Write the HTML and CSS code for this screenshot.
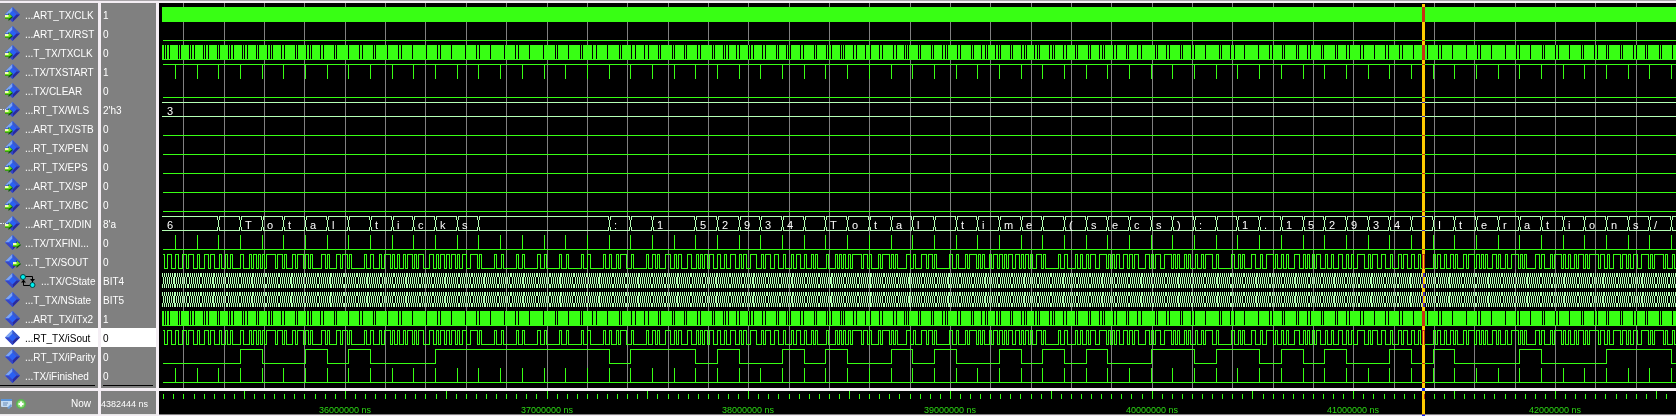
FILE: index.html
```html
<!DOCTYPE html>
<html lang="en">
<head>
<meta charset="utf-8">
<title>Wave - UART_TX</title>
<link rel="stylesheet" href="styles.css">
</head>
<body>
<svg class="defs" aria-hidden="true">
  <symbol id="diamond" viewBox="0 0 15 15">
    <path d="M7.500 0 15 7.500 7.500 15 0 7.500Z" fill="#2a60f4"/>
    <path d="M7.500 0 0 7.500H3.500L7.500 3.500Z" fill="#7fa6f2"/>
    <path d="M7.500 0 15 7.500H11.500L7.500 3.500Z" fill="#3c58c8"/>
    <path d="M15 7.500 7.500 15V11.500L11.500 7.500Z" fill="#2a2a9c"/>
    <path d="M0 7.500 7.500 15V11.500L3.500 7.500Z" fill="#3846c4"/>
  </symbol>
  <symbol id="arrow" viewBox="0 0 8 8">
    <path d="M0 2.500H3.500V0L8 4 3.500 8V6H0Z" fill="#0b5a08"/>
    <path d="M0 2H4V.500L7 3.500 4 5.500H0Z" fill="#6ee01c"/>
    <path d="M0 2H3.500V4H0Z" fill="#f4ffb8"/>
  </symbol>
  <symbol id="fsm" viewBox="0 0 16 14">
    <path d="M5 2.500H12.500V9M3.500 5V11.500H10" fill="none" stroke="#000"/>
    <path d="M10 5H15L12.500 8ZM1 8.500H6L3.500 5.500Z" fill="#000"/>
    <circle cx="3" cy="3" r="2.500" fill="#00f0f0" stroke="#044"/>
    <circle cx="12.500" cy="11" r="2.500" fill="#00f0f0" stroke="#044"/>
  </symbol>
</svg>
<main class="wave">
  <ul class="pane names" id="names"></ul>
  <ul class="pane values" id="values"></ul>
  <section class="scope"><svg id="scope" class="plot" role="img" aria-label="Signal waveforms"></svg></section>
  <div class="foot now">
    <svg class="tools" viewBox="0 0 26 12" aria-hidden="true">
      <rect x="1" y="1" width="11" height="8" rx="1" fill="#c4dcf4"/>
      <rect x="1" y="1" width="11" height="2" fill="#5c94d8"/>
      <path d="M3 5H8M3 7H7" stroke="#6c8cb4"/>
      <path d="M7 10 11 6 12 8 9 11Z" fill="#6f9fd8"/>
      <circle cx="21" cy="6" r="5" fill="#58b850"/>
      <circle cx="21" cy="6" r="3.500" fill="#8cdc74"/>
      <path d="M21 3.500V8.500M18.500 6H23.500" stroke="#fff" stroke-width="2"/>
    </svg>
    <span>Now</span>
  </div>
  <div class="foot time"><span>4382444 ns</span></div>
  <div class="foot ruler"><svg id="ruler" class="plot" role="img" aria-label="Time ruler"></svg></div>
  <div class="cursor"></div>
</main>
<script src="wave.js"></script>
</body>
</html>
```
FILE: styles.css
```css
* { box-sizing: border-box; }

body {
  margin: 0;
  background: #808080;
  font-family: "Liberation Sans", Arial, sans-serif;
  font-size: 10px;
  color: #fff;
}

.defs { position: absolute; width: 0; height: 0; }

.wave {
  position: relative;
  isolation: isolate;
  display: grid;
  grid-template-columns: 98px 55px 1fr;
  grid-template-rows: 385px 24px;
  gap: 3px;
  height: 100vh;
  min-height: 416px;
  padding-top: 3px;
  background: #f4eef4;
  box-shadow: inset 0 1px #a8a4a8;
  overflow: hidden;
}

.pane {
  margin: 0;
  padding: 2px 0 0;
  list-style: none;
  background: #808080;
  overflow: hidden;
}

.pane::after {
  content: "";
  display: block;
  height: 1px;
  background: #000;
}
.names::after { margin-right: 3px; }
.values::after { margin: 0 3px 0 2px; }

.row {
  display: flex;
  align-items: center;
  height: 19px;
  white-space: pre;
}
.names .row { padding-left: 5px; }
.values .row { padding: 2px 0 0 2px; }
.row.selected { background: #fff; color: #000; }

.icon { position: relative; display: flex; flex: none; width: 15px; height: 15px; }
.icon svg { width: 15px; height: 15px; }
.icon .dir { position: absolute; width: 8px; height: 8px; left: 0; top: 6px; }
.icon .dir.out { left: 8px; }
.icon.bus::before {
  content: "";
  position: absolute;
  left: -5px;
  top: 7px;
  width: 6px;
  border-top: 1px dotted #dde4f0;
}
.fsm { flex: none; width: 16px; height: 14px; }
.label { padding: 2px 0 0 5px; }

.scope, .ruler { background: #000; overflow: hidden; }
.plot { display: block; width: 100%; height: 100%; shape-rendering: crispEdges; }

.foot {
  display: flex;
  align-items: center;
  background: #808080;
  overflow: hidden;
  white-space: pre;
  border-bottom: 1px solid #e8e8e8;
}
.now { justify-content: space-between; padding: 2px 7px 0 0; }
.time { padding-top: 2px; font-size: 9px; }
.tools { width: 26px; height: 12px; }
.ruler { background: #000; border-bottom-color: #808080; }

.cursor {
  position: absolute;
  left: 1422px;
  top: 4px;
  bottom: 0;
  width: 3px;
  background: #ffcc00;
  mix-blend-mode: difference;
}

.grid { stroke: #808080; }
.bit { stroke: #38ff14; fill: none; }
.solid { fill: #38ff14; }
.gap { stroke: #000; }
.vec { stroke: #b4ffb4; fill: none; }
.chars { fill: #fff; font-size: 11px; }
.ticks { stroke: #38ff14; }
.times { fill: #2cd814; font-size: 9px; text-anchor: middle; }
```
FILE: wave.js
```js
const signals = [
  { name: "...ART_TX/CLK", value: "1", dir: "in", wave: "clock" },
  { name: "...ART_TX/RST", value: "0", dir: "in", wave: "low" },
  { name: "...T_TX/TXCLK", value: "0", dir: "in", wave: "fast" },
  { name: "...TX/TXSTART", value: "1", dir: "in", wave: "strobeLow" },
  { name: "...TX/CLEAR", value: "0", dir: "in", wave: "low" },
  { name: "...RT_TX/WLS", value: "2'h3", dir: "in", bus: true, wave: "constant" },
  { name: "...ART_TX/STB", value: "0", dir: "in", wave: "low" },
  { name: "...RT_TX/PEN", value: "0", dir: "in", wave: "low" },
  { name: "...RT_TX/EPS", value: "0", dir: "in", wave: "low" },
  { name: "...ART_TX/SP", value: "0", dir: "in", wave: "low" },
  { name: "...ART_TX/BC", value: "0", dir: "in", wave: "low" },
  { name: "...ART_TX/DIN", value: "8'a", dir: "in", bus: true, wave: "data" },
  { name: "...TX/TXFINI...", value: "0", dir: "out", wave: "strobeHigh" },
  { name: "...T_TX/SOUT", value: "0", dir: "out", wave: "serial" },
  { name: "...TX/CState", value: "BIT4", fsm: true, wave: "state" },
  { name: "...T_TX/NState", value: "BIT5", wave: "state" },
  { name: "...ART_TX/iTx2", value: "1", wave: "fast" },
  { name: "...RT_TX/iSout", value: "0", selected: true, wave: "serial" },
  { name: "...RT_TX/iParity", value: "0", wave: "parity" },
  { name: "...TX/iFinished", value: "0", wave: "strobeHigh" }
];

// Characters sent over the line, one per frame; the first was already in flight.
const sent = "666\nTotal ticks      : 1152934\nTotal time (secs): 1.152934\nIterations/Sec";
const LEFT = 159, ROW = 19, END = 4000;
const FRAME = 21.685, BIT = FRAME / 10, FIRST = 175.4 - FRAME - LEFT;
const frameX = k => Math.floor(FIRST + k * FRAME);

// Pixels in which the fast clock has no edge, by stretch of the trace.
const gaps = [
  [150, 1170, [44,50,59,86,92,119,125,134,161,167,176,203,209,236,242,251,278,284,293,320,326,353,362,368,395,404,437,443,470,479,485,512,521,554,560,596,629,638,671,677,713,746,755,788,829,863,872,905,947,980,989,1022,1064,1097,1106,1139]],
  [540, 1170, [10,45,52,86,122,128,158,170,203,239,245,275,287,314,324,356,362,398,404,432,440,473,480,516,522,549,555,565,590,598,624,632,640,666,675,708,714,740,746,752,782,790,824,830,860,866,874,900,908,914,940,948,975,990,1018,1026,1060,1068,1094,1100,1106,1134,1140]],
  [930, 1038, [5,11,37,45,52,82,92,123,129,155,165,171,197,206,212,240,248,275,282,288,313,321,327,358,366,372,400,408,435,441,474,482,508,516,522,550,560,590,596,622,633,675,681,708,718,750,756,784,793,826,868,874,902,912,944,985,1018,1026]],
  [1276, 1200, [19,25,61,67,94,103,136,142,178,184,211,220,253,262,295,328,337,370,379,412,453,487,496,529,571,604,613,646,688,721,730,763,799,805,838,847,880,916,922,955,964,991,997,1033,1039,1072,1081,1108,1114,1150,1156,1189]]
].flatMap(([x0, max, list]) => list.filter(v => v < max).map(v => x0 + Math.floor(v / 3) - LEFT));

const path = (cls, d) => `<path class="${cls}" d="${d}"/>`;
const text = (x, y, s) => `<text x="${x}" y="${y}">${s}</text>`;
const ones = c => c.charCodeAt(0).toString(2).replace(/0/g, "").length;

// A one-bit trace: list of [x, level], drawn as a continuous line.
function bitTrace(y, edges) {
  const lev = v => y + (v ? 2.5 : 16.5);
  let cur = edges[0][1], d = `M4 ${lev(cur)}`;
  for (const [x, v] of edges) {
    if (v !== cur && x > 4) d += `H${x + 0.5}V${lev(v)}`;
    cur = v;
  }
  return path("bit", d + `H${END}`);
}

// A vector crossing at column x.
const cross = (x, y) =>
  `M${x - 0.5} ${y + 2}v4M${x + 0.5} ${y + 6}v7M${x + 1.5} ${y + 2}v4M${x - 0.5} ${y + 13}v4M${x + 1.5} ${y + 13}v4`;

const draw = {
  clock: y => `<rect class="solid" x="3" y="${y + 2}" width="${END}" height="15"/>`,
  low: y => path("bit", `M4 ${y + 16.5}H${END}`),
  fast: y => draw.clock(y) + path("gap", gaps.map(x => `M${x + 0.5} ${y + 2}v14`).join("")),
  constant: y => path("vec", `M3 ${y + 2.5}H${END}M3 ${y + 16.5}H${END}`) +
    `<g class="chars">${text(8, y + 15, "3")}</g>`,
  strobes(y, level) {
    let d = `M4 ${y + level}H${END}`;
    for (let k = 1; k < sent.length; k++) d += `M${frameX(k) + 0.5} ${y + 2}v15`;
    return path("bit", d);
  },
  strobeLow: y => draw.strobes(y, 2.5),
  strobeHigh: y => draw.strobes(y, 16.5),
  data(y) {
    let from = 3, d = "", labels = text(8, y + 15, "6");
    for (let k = 1; k < sent.length; k++) {
      if (sent[k] === sent[k - 1]) continue;
      const x = frameX(k);
      d += `M${from} ${y + 2.5}H${x}M${from} ${y + 16.5}H${x}` + cross(x, y);
      from = x + 1;
      if (sent[k].trim() && k < sent.length - 3) labels += text(x + 5, y + 15, sent[k]);
    }
    d += `M${from} ${y + 2.5}H${END}M${from} ${y + 16.5}H${END}`;
    return path("vec", d) + `<g class="chars">${labels}</g>`;
  },
  serial(y) {
    const edges = [[0, 1]];
    [...sent].forEach((c, k) => {
      const start = FIRST + k * FRAME + 2.6, code = c.charCodeAt(0);
      edges.push([Math.floor(start), 0]);
      for (let b = 0; b < 8; b++) edges.push([Math.floor(start + (b + 1) * BIT), code >> b & 1]);
      edges.push([Math.floor(start + 9 * BIT), 1]);
    });
    return bitTrace(y, edges);
  },
  parity: y => bitTrace(y, [...sent].map((c, k) => [frameX(k), ones(c) & 1])),
  state(y) {
    let d = "", sinceWide = 2;
    for (let j = 0; j < 1800; j++) {
      const x = Math.floor(4 + j * BIT), next = Math.floor(4 + (j + 1) * BIT);
      d += cross(x, y);
      if (next - x === 3 && ++sinceWide % 3 === 0) d += `M${x + 1.5} ${y + 6}v7`;
    }
    return path("vec", d);
  }
};

const use = (id, cls) => `<svg class="${cls}" aria-hidden="true"><use href="#${id}"/></svg>`;

document.getElementById("names").innerHTML = signals.map(s =>
  `<li class="row${s.selected ? " selected" : ""}"><span class="icon${s.bus ? " bus" : ""}">${use("diamond", "gem")}` +
  `${s.dir ? use("arrow", "dir " + s.dir) : ""}</span>${s.fsm ? use("fsm", "fsm") : ""}` +
  `<span class="label">${s.name}</span></li>`).join("");

document.getElementById("values").innerHTML = signals.map(s =>
  `<li class="row${s.selected ? " selected" : ""}">${s.value}</li>`).join("");

const PER_MS = 201.7, MS36 = 345.3 - LEFT;

let grid = "";
for (let k = -4; k < 60; k++) grid += `M${Math.floor(MS36 + k * PER_MS / 5) + 0.5} 0V${ROW * 20 + 5}`;
document.getElementById("scope").innerHTML = path("grid", grid) +
  signals.map((s, i) => draw[s.wave](2 + i * ROW)).join("");

let ticks = "", times = "";
for (let k = -18; k < 240; k++) {
  const x = Math.floor(MS36 + k * PER_MS / 20) + 0.5;
  ticks += `M${x} ${k % 10 ? 3 : 0}V8`;
  if (k % 20 === 0 && k < 140) times += text(Math.floor(x), 22, `${36 + k / 20}000000 ns`);
}
document.getElementById("ruler").innerHTML = path("ticks", ticks) + `<g class="times">${times}</g>`;
```
